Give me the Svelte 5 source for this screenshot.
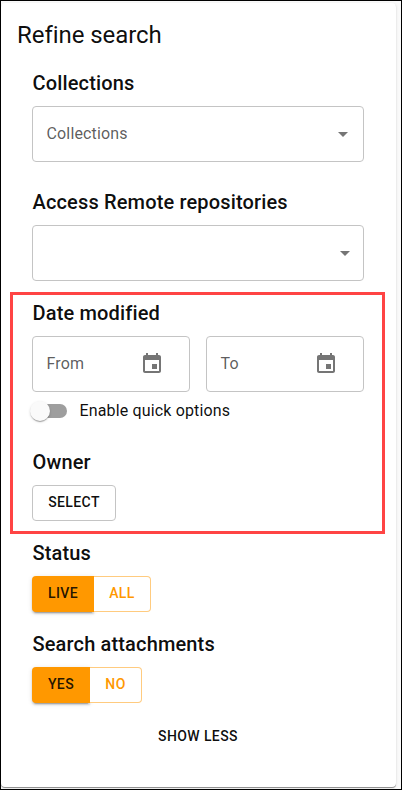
<script>
  const collectionsLabel = 'Collections';
  const dates = ['From', 'To'];
</script>

{#snippet arrow()}
  <svg class="arrow" viewBox="0 0 24 24" width="24" height="24"><path d="M7 10l5 5 5-5z" /></svg>
{/snippet}

<div class="frame">
  <main class="card">
    <h1>Refine search</h1>
    <div class="sections">
      <section class="wide">
        <h2>Collections</h2>
        <div class="field select"><span>{collectionsLabel}</span>{@render arrow()}</div>
      </section>
      <section>
        <h2>Access Remote repositories</h2>
        <div class="field select remote"><span></span>{@render arrow()}</div>
      </section>
      <section>
        <h2>Date modified</h2>
        <div class="dates">
          {#each dates as label}
            <div class="field date">
              <span>{label}</span>
              <svg viewBox="0 0 24 24" width="24" height="24"><path d="M17 12h-5v5h5v-5zM16 1v2H8V1H6v2H5c-1.11 0-1.99.9-1.99 2L3 19c0 1.1.89 2 2 2h14c1.1 0 2-.9 2-2V5c0-1.1-.9-2-2-2h-1V1h-2zm3 18H5V8h14v11z" /></svg>
            </div>
          {/each}
        </div>
        <div class="toggle"><span class="track"><span class="thumb"></span></span><span class="label">Enable quick options</span></div>
      </section>
      <section>
        <h2>Owner</h2>
        <button class="outlined">Select</button>
      </section>
      <section>
        <h2>Status</h2>
        <div class="group"><button class="on live">Live</button><button class="off all">All</button></div>
      </section>
      <section>
        <h2>Search attachments</h2>
        <div class="group"><button class="on yes">Yes</button><button class="off no">No</button></div>
      </section>
      <button class="less">Show less</button>
    </div>
  </main>
  <div class="highlight"></div>
</div>

<style>
  :global(body) { margin: 0; }
  * { box-sizing: border-box; }
  .frame {
    position: relative;
    width: 402px;
    height: 790px;
    padding: 2px 5px 2px 0;
    border: 1px solid #000;
    background: #fafafa;
    overflow: hidden;
    font-family: Roboto, "Liberation Sans", sans-serif;
    color: rgba(0, 0, 0, 0.95);
  }
  .card {
    height: 784px;
    padding: 16px 32px 0 16px;
    border-radius: 4px;
    background: #fff;
    box-shadow: 0 1px 0 rgba(0, 0, 0, 0.28), 0 1px 1px rgba(0, 0, 0, 0.14), 0 1px 3px rgba(0, 0, 0, 0.12);
  }
  h1 { margin: 0 0 16px; font-size: 24px; line-height: 32px; font-weight: 400; letter-spacing: -0.06px; }
  h2 { margin: 0 0 7px; padding-left: 0.5px; font-size: 20px; line-height: 32px; font-weight: 500; letter-spacing: 0.15px; white-space: nowrap; }
  .sections { display: flex; flex-direction: column; width: 332px; margin-left: 15px; }
  section { margin-bottom: 16px; }
  .wide { margin-bottom: 24px; }
  .field {
    display: flex;
    align-items: center;
    justify-content: space-between;
    height: 56px;
    padding: 0 8px 2px 13.5px;
    border: 1px solid #c4c4c4;
    border-radius: 4px;
    font-size: 16px;
    letter-spacing: 0.15px;
    color: rgba(0, 0, 0, 0.65);
  }
  .remote { padding-right: 6px; }
  svg { display: block; margin-top: 2px; fill: #757575; }
  .dates { display: flex; gap: 16px; }
  .date { width: 158px; padding-right: 25px; }
  .toggle { display: flex; align-items: center; height: 38px; }
  .track {
    position: relative;
    width: 34px;
    height: 14px;
    margin-left: 1px;
    border-radius: 7px;
    background: #9e9e9e;
  }
  .thumb {
    position: absolute;
    left: -3px;
    top: -3px;
    width: 20px;
    height: 20px;
    border-radius: 50%;
    background: #fafafa;
    box-shadow: 0 2px 1px -1px rgba(0, 0, 0, 0.2), 0 1px 1px rgba(0, 0, 0, 0.14), 0 1px 3px rgba(0, 0, 0, 0.12);
  }
  .label { margin-left: 12.5px; padding-bottom: 2px; font-size: 16px; letter-spacing: 0.15px; }
  button {
    display: block;
    height: 36px;
    padding: 0 0 2px;
    border: 0;
    background: none;
    border-radius: 4px;
    font: 500 14px/24px Roboto, "Liberation Sans", sans-serif;
    letter-spacing: 0.4px;
    text-transform: uppercase;
    color: rgba(0, 0, 0, 0.95);
  }
  .outlined { width: 84px; border: 1px solid #c4c4c4; }
  .group { display: flex; }
  .live { width: 62px; }
  .all { width: 57px; }
  .yes { width: 58px; }
  .no { width: 52px; }
  .on {
    border-radius: 4px 0 0 4px;
    background: #ff9800;
    color: rgba(0, 0, 0, 0.87);
    box-shadow: 0 3px 1px -2px rgba(0, 0, 0, 0.2), 0 2px 2px rgba(0, 0, 0, 0.14), 0 1px 5px rgba(0, 0, 0, 0.12);
  }
  .off {
    position: relative;
    border: 1px solid #ffcb7f;
    border-left: 0;
    border-radius: 0 4px 4px 0;
    background: #fff;
    color: #ff9800;
  }
  .less { align-self: center; margin-top: -1px; padding-bottom: 0; }
  .highlight {
    position: absolute;
    left: 9px;
    top: 291px;
    width: 375px;
    height: 242px;
    border: 3px solid #ff4444;
  }
</style>
